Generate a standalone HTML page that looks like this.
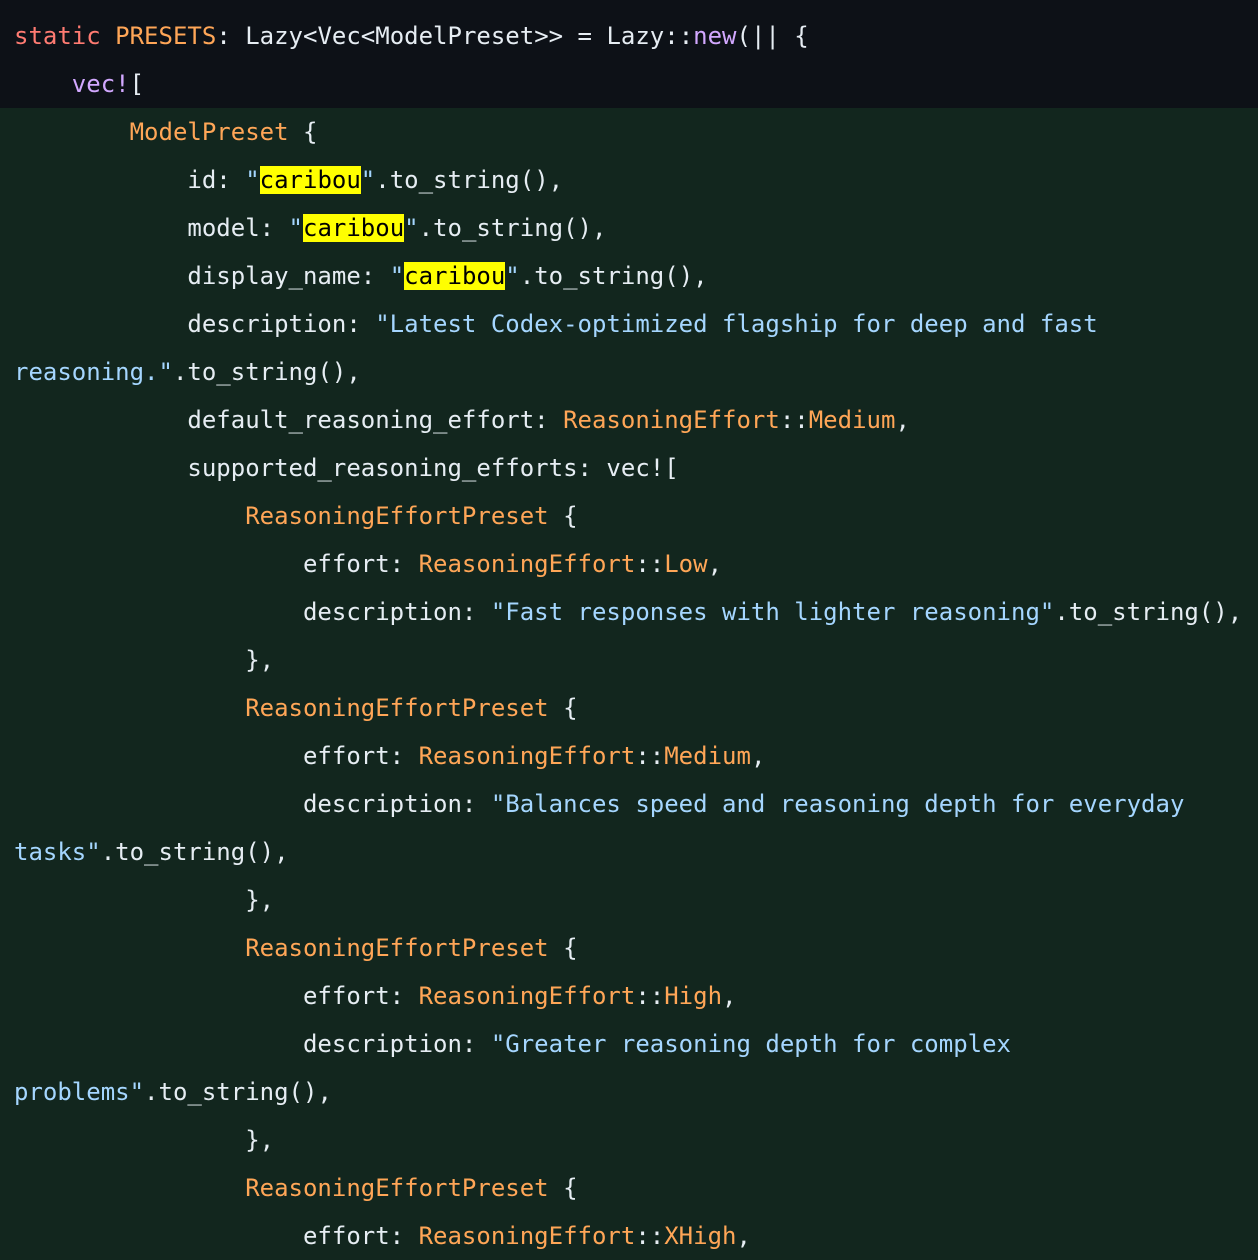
<!DOCTYPE html>
<html><head><meta charset="utf-8"><style>
html,body{margin:0;padding:0;width:1258px;height:1260px;overflow:hidden;background:#12261e}
pre{margin:0;font-family:"DejaVu Sans Mono","Liberation Mono",monospace;font-size:24px;line-height:48px;color:#e6edf3;padding:12px 0 0 14px;white-space:pre;position:relative}
.top{position:absolute;left:0;top:0;width:1258px;height:108px;background:#0d1117}
.k{color:#ff7b72}.o{color:#ffa657}.p{color:#d2a8ff}.s{color:#a5d6ff}
.h{background:#ffff00;color:#000}
</style></head><body><div class="top"></div><pre><span class="k">static</span> <span class="o">PRESETS</span>: Lazy&lt;Vec&lt;ModelPreset&gt;&gt; = Lazy::<span class="p">new</span>(|| {
    <span class="p">vec!</span>[
        <span class="o">ModelPreset</span> {
            id: <span class="s">"</span><span class="h">caribou</span><span class="s">"</span>.to_string(),
            model: <span class="s">"</span><span class="h">caribou</span><span class="s">"</span>.to_string(),
            display_name: <span class="s">"</span><span class="h">caribou</span><span class="s">"</span>.to_string(),
            description: <span class="s">"Latest Codex-optimized flagship for deep and fast</span>
<span class="s">reasoning."</span>.to_string(),
            default_reasoning_effort: <span class="o">ReasoningEffort</span>::<span class="o">Medium</span>,
            supported_reasoning_efforts: vec![
                <span class="o">ReasoningEffortPreset</span> {
                    effort: <span class="o">ReasoningEffort</span>::<span class="o">Low</span>,
                    description: <span class="s">"Fast responses with lighter reasoning"</span>.to_string(),
                },
                <span class="o">ReasoningEffortPreset</span> {
                    effort: <span class="o">ReasoningEffort</span>::<span class="o">Medium</span>,
                    description: <span class="s">"Balances speed and reasoning depth for everyday</span>
<span class="s">tasks"</span>.to_string(),
                },
                <span class="o">ReasoningEffortPreset</span> {
                    effort: <span class="o">ReasoningEffort</span>::<span class="o">High</span>,
                    description: <span class="s">"Greater reasoning depth for complex</span>
<span class="s">problems"</span>.to_string(),
                },
                <span class="o">ReasoningEffortPreset</span> {
                    effort: <span class="o">ReasoningEffort</span>::<span class="o">XHigh</span>,
</pre></body></html>
